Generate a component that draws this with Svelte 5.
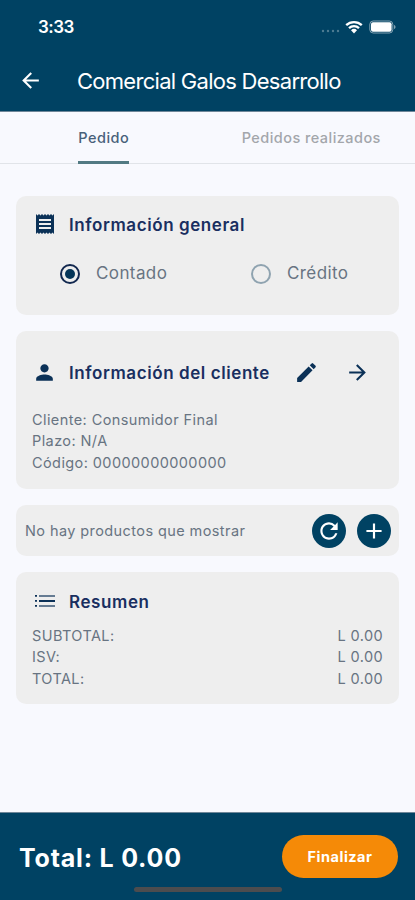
<script lang="ts">
  let tab = "pedido";
  let pago = "contado";

  const cliente = [
    "Cliente: Consumidor Final",
    "Plazo: N/A",
    "Código: 00000000000000",
  ];

  const resumen = [
    { nombre: "SUBTOTAL:", valor: "L 0.00" },
    { nombre: "ISV:", valor: "L 0.00" },
    { nombre: "TOTAL:", valor: "L 0.00" },
  ];
</script>

<div class="app">
  <header>
    <div class="status">
      <span class="hora">3:33</span>
      <div class="status-icons">
        <svg class="signal" width="19" height="4" viewBox="0 0 19 4">
          <circle cx="2" cy="2" r="1.2" />
          <circle cx="7" cy="2" r="1.2" />
          <circle cx="12" cy="2" r="1.2" />
          <circle cx="17" cy="2" r="1.2" />
        </svg>
        <svg class="wifi" width="18" height="14" viewBox="0 0 18 14">
          <path d="M1.2 5.2a11.2 11.2 0 0 1 15.6 0" />
          <path d="M4 8.1a7.2 7.2 0 0 1 10 0" />
          <path class="fill" d="M6 10.3a4.3 4.3 0 0 1 6 0L9 13.6z" />
        </svg>
        <svg class="bateria" width="27" height="14" viewBox="0 0 27 14">
          <rect class="marco" x="0.8" y="1" width="23" height="12" rx="3.4" />
          <rect x="2" y="2.2" width="20.6" height="9.6" rx="2" />
          <path class="punta" d="M25 5v4c1-.3 1.500-1.100 1.500-2s-.5-1.700-1.500-2z" />
        </svg>
      </div>
    </div>
    <div class="barra">
      <button class="icon-btn" aria-label="Volver">
        <svg width="25" height="25" viewBox="0 0 24 24">
          <path d="M20 11H7.830l5.590-5.590L12 4l-8 8 8 8 1.410-1.410L7.830 13H20v-2z" />
        </svg>
      </button>
      <h1>Comercial Galos Desarrollo</h1>
    </div>
  </header>

  <nav>
    <button class:activo={tab === "pedido"} on:click={() => (tab = "pedido")}>
      <span>Pedido</span>
    </button>
    <button class:activo={tab === "realizados"} on:click={() => (tab = "realizados")}>
      <span>Pedidos realizados</span>
    </button>
  </nav>

  <main>
    <section class="card general">
      <div class="titulo">
        <svg width="24" height="24" viewBox="0 0 24 24">
          <path d="M18 17H6v-2h12v2zm0-4H6v-2h12v2zm0-4H6V7h12v2zM3 22l1.500-1.500L6 22l1.500-1.500L9 22l1.500-1.500L12 22l1.500-1.500L15 22l1.500-1.500L18 22l1.500-1.500L21 22V2l-1.500 1.500L18 2l-1.500 1.500L15 2l-1.500 1.500L12 2l-1.500 1.500L9 2 7.500 3.500 6 2 4.500 3.500 3 2v20z" />
        </svg>
        <h2>Información general</h2>
      </div>
      <div class="opciones">
        <button class="radio" on:click={() => (pago = "contado")}>
          <span class="circulo" class:marcado={pago === "contado"}></span>
          Contado
        </button>
        <button class="radio" on:click={() => (pago = "credito")}>
          <span class="circulo" class:marcado={pago === "credito"}></span>
          Crédito
        </button>
      </div>
    </section>

    <section class="card cliente">
      <div class="titulo">
        <svg width="25" height="25" viewBox="0 0 24 24">
          <path d="M12 12c2.210 0 4-1.790 4-4s-1.790-4-4-4-4 1.790-4 4 1.790 4 4 4zm0 2c-2.670 0-8 1.340-8 4v2h16v-2c0-2.660-5.330-4-8-4z" />
        </svg>
        <h2>Información del cliente</h2>
        <div class="acciones">
          <button class="icon-btn" aria-label="Editar">
            <svg width="25" height="25" viewBox="0 0 24 24">
              <path d="M3 17.250V21h3.750L17.810 9.940l-3.750-3.750L3 17.250zM20.710 7.040c.39-.39.39-1.020 0-1.410l-2.340-2.340a.996.996 0 0 0-1.410 0l-1.830 1.830 3.750 3.750 1.830-1.830z" />
            </svg>
          </button>
          <button class="icon-btn" aria-label="Siguiente">
            <svg width="25" height="25" viewBox="0 0 24 24">
              <path d="M12 4l-1.410 1.410L16.170 11H4v2h12.170l-5.580 5.590L12 20l8-8z" />
            </svg>
          </button>
        </div>
      </div>
      {#each cliente as linea}
        <p>{linea}</p>
      {/each}
    </section>

    <section class="card productos">
      <span>No hay productos que mostrar</span>
      <button class="redondo" aria-label="Recargar">
        <svg width="26" height="26" viewBox="0 0 24 24">
          <path d="M17.650 6.350A7.958 7.958 0 0 0 12 4c-4.420 0-7.990 3.580-7.990 8s3.570 8 7.990 8c3.730 0 6.840-2.550 7.730-6h-2.080A5.990 5.990 0 0 1 12 18c-3.310 0-6-2.690-6-6s2.690-6 6-6c1.660 0 3.140.69 4.220 1.780L13 11h7V4l-2.350 2.350z" />
        </svg>
      </button>
      <button class="redondo" aria-label="Agregar">
        <svg width="26" height="26" viewBox="0 0 24 24">
          <path d="M19 13h-6v6h-2v-6H5v-2h6V5h2v6h6v2z" />
        </svg>
      </button>
    </section>

    <section class="card resumen">
      <div class="titulo">
        <svg width="24" height="24" viewBox="0 0 24 24">
          <path d="M2 6h2v1.800H2zM2 11h2v1.800H2zM2 16h2v1.800H2z" />
          <path class="tenue" d="M6 6h16v2H6zM6 16h16v2H6z" />
          <path d="M6 11h16v2H6z" />
        </svg>
        <h2>Resumen</h2>
      </div>
      {#each resumen as fila}
        <div class="fila">
          <span>{fila.nombre}</span>
          <span>{fila.valor}</span>
        </div>
      {/each}
    </section>
  </main>

  <footer>
    <strong>Total: L 0.00</strong>
    <button class="finalizar">Finalizar</button>
    <div class="home"></div>
  </footer>
</div>

<style>
  .app {
    display: flex;
    flex-direction: column;
    width: 415px;
    height: 900px;
    background: #f8f9fe;
    color: #687482;
    font-family: Inter, "Liberation Sans", sans-serif;
    overflow: hidden;
  }

  button {
    padding: 0;
    border: none;
    background: none;
    color: inherit;
    font: inherit;
    letter-spacing: inherit;
    cursor: pointer;
  }

  svg {
    display: block;
    flex-shrink: 0;
    fill: currentColor;
  }

  h1,
  h2,
  p {
    margin: 0;
  }

  header {
    box-sizing: border-box;
    height: 112px;
    background: #004263;
    border-bottom: 1px solid #6f8799;
    color: #fff;
  }

  .status {
    display: flex;
    justify-content: space-between;
    align-items: center;
    height: 54px;
    padding: 0 19px 0 38px;
  }

  .hora {
    font-size: 17px;
    font-weight: 600;
    letter-spacing: -0.5px;
  }

  .status-icons {
    display: flex;
    align-items: center;
  }

  .signal {
    margin: 8px 5px 0 0;
    opacity: 0.3;
  }

  .wifi {
    margin-right: 6px;
    fill: none;
    stroke: #fff;
    stroke-width: 2.3;
  }

  .wifi .fill {
    fill: #fff;
    stroke: none;
  }

  .bateria .marco {
    fill: none;
    stroke: #fff;
    stroke-opacity: 0.5;
  }

  .bateria .punta {
    opacity: 0.5;
  }

  .barra {
    display: flex;
    align-items: center;
    height: 53px;
    padding-left: 18px;
  }

  h1 {
    margin-left: 34px;
    font-size: 22px;
    font-weight: 400;
    letter-spacing: -0.72px;
    white-space: nowrap;
  }

  nav {
    display: grid;
    grid-template-columns: 1fr 1fr;
    height: 51px;
    flex-shrink: 0;
    border-bottom: 1px solid #e1e4e9;
    color: #a3a6ab;
    font-size: 14.5px;
    font-weight: 450;
    letter-spacing: 0.45px;
  }

  nav button {
    display: flex;
    justify-content: center;
  }

  nav span {
    box-sizing: border-box;
    height: 52px;
    border-bottom: 3px solid transparent;
    line-height: 51px;
  }

  nav .activo {
    color: #48617a;
  }

  nav .activo span {
    border-bottom-color: #527a83;
    border-radius: 3px 3px 0 0;
  }

  main {
    display: flex;
    flex: 1;
    flex-direction: column;
    gap: 16px;
    padding: 32px 16px 0;
    font-size: 14.5px;
    letter-spacing: 0.41px;
    line-height: 21.300px;
  }

  .card {
    box-sizing: border-box;
    border-radius: 10px;
    background: #eee;
  }

  .titulo {
    display: flex;
    align-items: center;
    height: 24px;
    color: #0b3157;
  }

  h2 {
    margin: 3px 0 0 12px;
    font-size: 17px;
    font-weight: 600;
    letter-spacing: 0.58px;
    color: #192e60;
    white-space: nowrap;
  }

  .general {
    height: 119px;
    padding: 16px 17px;
  }

  .opciones {
    display: grid;
    grid-template-columns: 191px 1fr;
    margin: 27px 0 0 27px;
  }

  .radio {
    display: flex;
    align-items: center;
    font-size: 17px;
    letter-spacing: 0.4px;
  }

  .circulo {
    display: grid;
    place-items: center;
    box-sizing: border-box;
    width: 20px;
    height: 20px;
    margin-right: 16px;
    border: 2px solid #8fa3b0;
    border-radius: 50%;
  }

  .circulo.marcado {
    border-color: #12284f;
  }

  .circulo.marcado::after {
    width: 10px;
    height: 10px;
    border-radius: 50%;
    background: #043558;
    content: "";
  }

  .cliente {
    height: 158px;
    padding: 29px 16px 0;
  }

  .cliente .titulo {
    margin-bottom: 25px;
  }

  .acciones {
    display: flex;
    gap: 26px;
    margin-left: 24px;
  }

  .productos {
    display: flex;
    align-items: center;
    gap: 11px;
    height: 51px;
    padding: 0 8px 0 9px;
  }

  .productos span {
    flex: 1;
  }

  .redondo {
    display: grid;
    place-items: center;
    width: 34px;
    height: 34px;
    border-radius: 50%;
    background: #004263;
    color: #fff;
  }

  .resumen {
    height: 132px;
    padding: 17px 16px 0 16px;
  }

  .resumen .titulo {
    margin: 0 0 12px 1px;
  }

  .tenue {
    opacity: 0.6;
  }

  .fila {
    display: flex;
    justify-content: space-between;
  }

  footer {
    position: relative;
    display: flex;
    justify-content: space-between;
    align-items: center;
    box-sizing: border-box;
    height: 88px;
    padding: 0 17px 0 19px;
    border-top: 1px solid #6f8799;
    background: #004263;
    color: #fff;
  }

  footer strong {
    margin-top: 2px;
    font-size: 25px;
    font-weight: 700;
    letter-spacing: 0.8px;
  }

  .finalizar {
    width: 116px;
    height: 43px;
    border-radius: 22px;
    background: #f58a07;
    font-size: 14.5px;
    font-weight: 700;
    letter-spacing: 0.5px;
  }

  .home {
    position: absolute;
    bottom: 8px;
    left: 134px;
    width: 148px;
    height: 5px;
    border-radius: 3px;
    background: #4c4c4e;
  }
</style>
